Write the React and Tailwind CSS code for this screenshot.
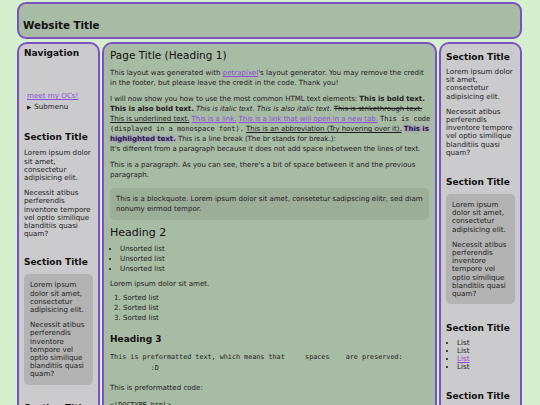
const Side = ({ children, className = "" }) => (
  <aside
    className={`w-[83px] shrink-0 h-[380px] bg-[#cbcacc] border-2 border-b-0 border-[#7b52c2] rounded-t-[10px] px-[5px] text-[7.15px] leading-[8.2px] text-[#1c1c1c] ${className}`}
  >
    {children}
  </aside>
);

const SectionTitle = ({ children, className = "" }) => (
  <h2 className={`font-bold text-[9px] leading-[12px] text-[#111] ${className}`}>{children}</h2>
);

const LoremBlock = ({ boxed, className = "" }) => (
  <div className={`${boxed ? "bg-[#b3b3b3] rounded-[5px] px-[6px] pt-[7px] pb-[6px]" : ""} ${className}`}>
    <p>Lorem ipsum dolor sit amet, consectetur adipisicing elit.</p>
    <p className="mt-[7px]">Necessit atibus perferendis inventore tempore vel optio similique blanditiis quasi quam?</p>
  </div>
);

const mono = { fontFamily: '"DejaVu Sans Mono", "Liberation Mono", monospace' };

export default function App() {
  return (
    <div
      className="w-[540px] h-[405px] overflow-hidden bg-[#d5efcf] pt-[2px]"
      style={{ fontFamily: '"DejaVu Sans", Verdana, sans-serif' }}
    >
      <div className="w-[505px] ml-[17px]">
        <header className="h-[37px] bg-[#a8bba4] border-2 border-[#7b52c2] rounded-[9px] flex items-end px-[4px] pb-[6px]">
          <h1 className="font-bold text-[10.3px] leading-[12px] text-[#111]">Website Title</h1>
        </header>

        <div className="flex gap-[2px] mt-[3px] items-start">
          <Side className="pt-[3px]">
            <h2 className="font-bold text-[9px] leading-[12px] text-[#111]">Navigation</h2>
            <ul className="mt-[31px] pl-[3px]">
              <li className="py-[2px]">
                <a className="text-[#8a4fd6] underline">meet my OCs!</a>
              </li>
              <li className="py-[1px] flex items-center gap-[3px]">
                <span className="text-[5.5px]">▶</span>
                <span>Submenu</span>
              </li>
            </ul>
            <SectionTitle className="mt-[19px]">Section Title</SectionTitle>
            <LoremBlock className="mt-[6px]" />
            <SectionTitle className="mt-[18px]">Section Title</SectionTitle>
            <LoremBlock boxed className="mt-[6px]" />
            <SectionTitle className="mt-[17px]">Section Title</SectionTitle>
          </Side>

          <main className="w-[335px] shrink-0 h-[380px] bg-[#a8bba4] border-2 border-b-0 border-[#7b52c2] rounded-t-[10px] pl-[6px] pr-[2px] pt-[4px] text-[7.05px] leading-[10px] text-[#1c1c1c]">
            <h1 className="text-[10.5px] leading-[14px] text-[#111]">Page Title (Heading 1)</h1>
            <p className="mt-[6px] pr-[4px]">
              This layout was generated with <a className="text-[#8a4fd6] underline">petrapixel</a>'s layout generator.
              You may remove the credit in the footer, but please leave the credit in the code. Thank you!
            </p>
            <p className="mt-[6px] tracking-[-0.06px]">
              I will now show you how to use the most common HTML text elements: <b>This is bold text.</b>{" "}
              <strong>This is also bold text.</strong> <i>This is italic text.</i> <em>This is also italic text.</em>{" "}
              <s>This is strikethrough text.</s> <u>This is underlined text.</u>{" "}
              <a className="text-[#8a4fd6] underline">This is a link.</a>{" "}
              <a className="text-[#8a4fd6] underline">This is a link that will open in a new tab.</a>{" "}
              <code style={mono}>This is code (displayed in a monospace font).</code>{" "}
              <abbr className="underline">This is an abbreviation (Try hovering over it).</abbr>{" "}
              <mark className="bg-transparent font-bold text-[#2a1a4a] [text-shadow:0_0_3px_#9b6be0]">This is highlighted text.</mark>{" "}
              This is a line break (The br stands for break.):
              <br />
              It's different from a paragraph because it does not add space inbetween the lines of text.
            </p>
            <p className="mt-[6px] pr-[4px]">
              This is a paragraph. As you can see, there's a bit of space between it and the previous paragraph.
            </p>
            <blockquote className="mt-[8px] mr-[4px] bg-[#9cae98] rounded-[5px] px-[6px] py-[6px]">
              This is a blockquote. Lorem ipsum dolor sit amet, consetetur sadipscing elitr, sed diam nonumy eirmod tempor.
            </blockquote>
            <h2 className="mt-[6px] text-[11px] leading-[14px] text-[#111]">Heading 2</h2>
            <ul className="mt-[4px] pl-[10px] list-disc">
              <li>Unsorted list</li>
              <li>Unsorted list</li>
              <li>Unsorted list</li>
            </ul>
            <p className="mt-[5px]">Lorem ipsum dolor sit amet.</p>
            <ol className="mt-[4px] pl-[13px] list-decimal">
              <li>Sorted list</li>
              <li>Sorted list</li>
              <li>Sorted list</li>
            </ol>
            <h3 className="mt-[10px] text-[9px] leading-[12px] font-bold text-[#111]">Heading 3</h3>
            <pre className="mt-[7px] text-[6.75px] leading-[11px]" style={mono}>{`This is preformatted text, which means that     spaces    are preserved:
          :D`}</pre>
            <p className="mt-[9px]">This is preformatted code:</p>
            <pre className="mt-[7px] text-[6.75px] leading-[10px]" style={mono}>{`<!DOCTYPE html>`}</pre>
          </main>

          <Side className="pt-[7px]">
            <SectionTitle>Section Title</SectionTitle>
            <LoremBlock className="mt-[5px]" />
            <SectionTitle className="mt-[19px]">Section Title</SectionTitle>
            <LoremBlock boxed className="mt-[6px]" />
            <SectionTitle className="mt-[18px]">Section Title</SectionTitle>
            <ul className="mt-[5px] pl-[11px] list-disc leading-[8px]">
              <li>List</li>
              <li>List</li>
              <li>
                <a className="text-[#8a4fd6] underline">List</a>
              </li>
              <li>List</li>
            </ul>
            <SectionTitle className="mt-[19px]">Section Title</SectionTitle>
          </Side>
        </div>
      </div>
    </div>
  );
}
